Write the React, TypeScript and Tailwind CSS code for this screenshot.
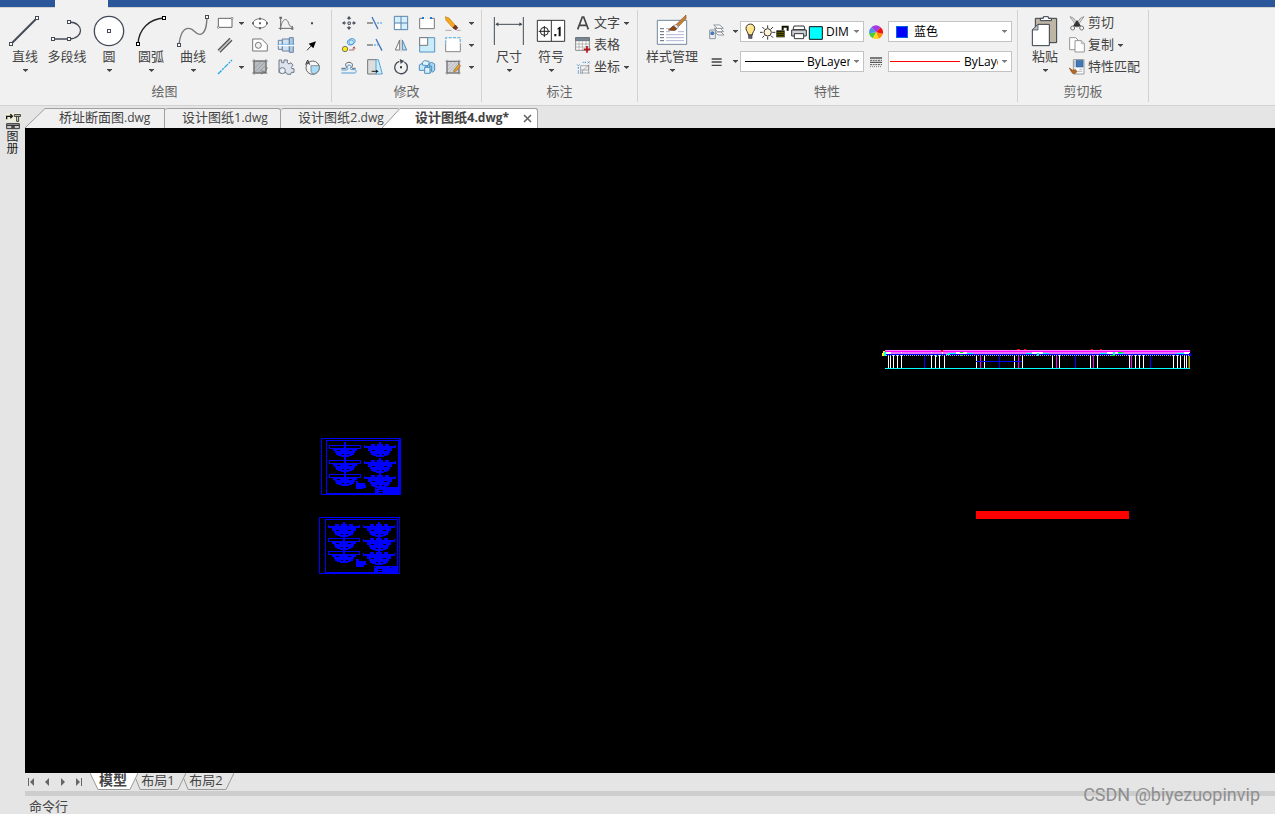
import type { ReactNode } from "react";

type IconProps = { x: number; y: number; size?: "sm" | "lg"; children: ReactNode };

/* Icons are drawn on a 3-units-per-pixel sheet; x and y pick the icon's cell. */
function Icon({ x, y, size = "sm", children }: IconProps) {
  const units = size === "lg" ? 108 : 66;
  return (
    <svg
      viewBox={`${x} ${y} ${units} ${units}`}
      className={size === "lg" ? "size-9 shrink-0" : "size-[22px] shrink-0"}
      fill="none"
      stroke="#444b57"
      strokeWidth="3"
      aria-hidden="true"
    >
      {children}
    </svg>
  );
}

function Caret({ className = "" }: { className?: string }) {
  return (
    <svg viewBox="0 0 5 3" className={`h-[3px] w-[5px] shrink-0 ${className}`} fill="#444" aria-hidden="true">
      <path d="M0 0h5v.6L2.500 3 0 .6z" />
    </svg>
  );
}

function BigButton({ icon, label, wide = false, menu = true }: { icon: ReactNode; label: string; wide?: boolean; menu?: boolean }) {
  return (
    <button type="button" className={`flex flex-col items-center pt-px whitespace-nowrap ${wide ? "w-15" : "w-[42px]"}`}>
      {icon}
      <span className="leading-[14px]">{label}</span>
      <span className="flex h-4 items-center">{menu && <Caret />}</span>
    </button>
  );
}

function IconButton({ label, children }: { label: string; children: ReactNode }) {
  return (
    <button type="button" aria-label={label} className="flex items-center justify-center">
      {children}
    </button>
  );
}

function MenuArrow({ label }: { label: string }) {
  return (
    <button type="button" aria-label={label} className="flex items-center justify-center">
      <Caret />
    </button>
  );
}

function RowButton({ icon, label, menu = false }: { icon: ReactNode; label: string; menu?: boolean }) {
  return (
    <button type="button" className="flex h-[22px] items-center whitespace-nowrap">
      {icon}
      <span className="pb-[2px] leading-4">{label}</span>
      {menu && <Caret className="ml-1" />}
    </button>
  );
}

function Group({ title, pad = "px-1", children }: { title: string; pad?: string; children: ReactNode }) {
  return (
    <>
      <section className={`flex shrink-0 flex-col pt-1 ${pad}`}>
        <div className="flex h-[66px]">{children}</div>
        <h2 className="text-center leading-[27px] text-[#666]">{title}</h2>
      </section>
      <div className="mt-[2px] mb-[3px] w-px shrink-0 bg-[#d2d2d2]" />
    </>
  );
}

function Combo({ label, value, lead }: { label: string; value: string; lead: ReactNode }) {
  return (
    <div className="flex h-[21px] w-[124px] items-center border border-[#c3c3c3] bg-white">
      {lead}
      <select
        aria-label={label}
        className="min-w-0 flex-1 appearance-none overflow-hidden bg-transparent text-clip whitespace-nowrap text-black outline-none"
      >
        <option>{value}</option>
      </select>
      <Caret className="mx-1 opacity-70" />
    </div>
  );
}

const node = (cx: number, cy: number) => (
  <rect key={`${cx}-${cy}`} x={cx - 4.5} y={cy - 4.5} width="9" height="9" fill="#fff" />
);

function DrawGroup() {
  return (
    <Group title="绘图" pad="pl-1 pr-[6px]">
      <BigButton
        label="直线"
        icon={
          <Icon x={21} y={39} size="lg">
            <path d="M33 132 111 54" strokeWidth="6" />
            {node(33, 132)}
            {node(111, 54)}
          </Icon>
        }
      />
      <BigButton
        label="多段线"
        menu={false}
        icon={
          <Icon x={147} y={39} size="lg">
            <path d="M159 117h48M207 66c46 0 46 51 0 51" strokeWidth="4" />
            {node(159, 117)}
            {node(207, 117)}
            {node(207, 66)}
          </Icon>
        }
      />
      <BigButton
        label="圆"
        icon={
          <Icon x={273} y={39} size="lg">
            <circle cx="327" cy="93" r="44" fill="#fff" strokeWidth="4" />
            {node(327, 93)}
          </Icon>
        }
      />
      <BigButton
        label="圆弧"
        icon={
          <Icon x={399} y={39} size="lg">
            <path d="M414 132c2-44 34-76 78-78" stroke="#222" strokeWidth="4" />
            <g stroke="#000">
              {node(414, 132)}
              {node(492, 54)}
            </g>
          </Icon>
        }
      />
      <BigButton
        label="曲线"
        icon={
          <Icon x={525} y={39} size="lg">
            <path d="M537 135c4-40 16-50 29-50 18 0 18 20 35 18 16-3 19-25 20-52" stroke="#777" strokeWidth="4" />
            {node(537, 135)}
            {node(621, 51)}
          </Icon>
        }
      />
      <div className="grid grid-cols-[22px_11px_26px_26px_26px] grid-rows-[22px_22px_22px]">
        <IconButton label="矩形">
          <Icon x={27} y={36}>
            <path d="M40 55h41v27H40z" fill="#fff" stroke="#666" />
            <g fill="#fff" stroke="#666" strokeWidth="2">
              <circle cx="40" cy="82" r="3" />
              <circle cx="81" cy="55" r="3" />
            </g>
          </Icon>
        </IconButton>
        <MenuArrow label="矩形选项" />
        <IconButton label="椭圆">
          <Icon x={132} y={36}>
            <ellipse cx="165" cy="70" rx="21" ry="14" fill="#fff" stroke="#777" />
            <g fill="#666" stroke="none">
              <path d="M141 67h6v6h-6zM183 67h6v6h-6zM162 53h6v6h-6zM162 67h6v6h-6zM162 82h6v6h-6z" />
            </g>
          </Icon>
        </IconButton>
        <IconButton label="样条">
          <Icon x={210} y={36}>
            <path d="M227 51v39M221 85h43" stroke="#666" />
            <path d="M227 82c6-28 18-30 24-12 3 9 5 11 13 9" stroke="#777" strokeWidth="3" />
            <path d="M223 50h8v6h-8zM259 82h6v7h-6z" fill="#666" stroke="none" />
          </Icon>
        </IconButton>
        <IconButton label="点">
          <Icon x={288} y={36}>
            <path d="M318 67h6v6h-6z" fill="#444" stroke="none" />
          </Icon>
        </IconButton>

        <IconButton label="双线">
          <Icon x={27} y={102}>
            <path d="M39 151 75 115M45 157l36-36" stroke="#555" strokeWidth="4" />
            <path d="M42 154 78 118" stroke="#aaa" strokeWidth="3" />
          </Icon>
        </IconButton>
        <span />
        <IconButton label="区域">
          <Icon x={132} y={102}>
            <path d="M143 117h27l17 17v19h-44z" fill="#fff" stroke="#777" />
            <circle cx="160" cy="136" r="9" fill="#f1f1f1" stroke="#777" />
          </Icon>
        </IconButton>
        <IconButton label="轴">
          <Icon x={210} y={102}>
            <g stroke="#6d829b" strokeWidth="3">
              <path d="M220 121h12v27h-12z" fill="#dcebf8" />
              <path d="M232 117h21v36h-21z" fill="#cfe2f5" />
              <path d="M253 113h12v44h-12z" fill="#a9c9ec" />
            </g>
            <path d="M220 136h47" stroke="#fff" strokeWidth="5" />
            <path d="M218 133h50" stroke="#4aa3e8" strokeWidth="2" />
          </Icon>
        </IconButton>
        <IconButton label="引线箭头">
          <Icon x={288} y={102}>
            <path d="M306 151l14-15" stroke="#333" />
            <path d="M333 124l-22 7 14 14z" fill="#000" stroke="none" />
          </Icon>
        </IconButton>

        <IconButton label="构造线">
          <Icon x={27} y={168}>
            <path d="M39 222 81 180" stroke="#22a7e8" strokeDasharray="15 3 6 3" strokeWidth="4" />
          </Icon>
        </IconButton>
        <MenuArrow label="构造线选项" />
        <IconButton label="填充">
          <Icon x={132} y={168}>
            <path d="M147 183h36v36h-36z" fill="#b9bdc2" stroke="#666" />
            <path d="M141 183h48M141 219h30M147 177v48M183 177v30" stroke="#666" strokeWidth="2" />
            <path d="M148 205l20-20M150 216l31-31M160 218l22-22" stroke="#8d9298" strokeWidth="2" />
            <path d="M168 222c12-4 16-10 19-20M169 212l18 9" stroke="#555" strokeWidth="2" />
          </Icon>
        </IconButton>
        <IconButton label="零件">
          <Icon x={210} y={168}>
            <path
              d="M222 180h8v8h7v-8h10v8l5 4 6-4 6 8-5 6 1 4h7v11h-8l-2 6h-10l-3-5H222z"
              fill="#dce3ec"
              stroke="#6d7886"
            />
            <circle cx="232" cy="212" r="9" fill="#eef2f7" stroke="#6d7886" />
          </Icon>
        </IconButton>
        <IconButton label="局部放大">
          <Icon x={288} y={168}>
            <circle cx="323" cy="203" r="20" fill="#f5f5f5" stroke="#666" />
            <path d="M318 197h25c1 16-8 24-20 25l-5-8z" fill="#a9dcf8" stroke="#666" strokeWidth="2" />
            <path d="M302 194l6-14 6 14M304 189h8" stroke="#333" />
          </Icon>
        </IconButton>
      </div>
    </Group>
  );
}

function ModifyGroup() {
  return (
    <Group title="修改">
      <div className="grid grid-cols-[26px_26px_26px_26px_26px_11px] grid-rows-[22px_22px_22px]">
        <IconButton label="移动">
          <Icon x={24} y={36}>
            <path d="M54 66h7v7h-7z" fill="#fff" />
            <path d="M57 48l7 8H50zM57 90l7-8H50zM36 69l8-6v12zM78 69l-8-6v12z" fill="#444b57" stroke="none" />
            <path d="M57 54v6M57 78v6M42 69h6M66 69h6" />
          </Icon>
        </IconButton>
        <IconButton label="修剪">
          <Icon x={102} y={36}>
            <path d="M111 69h18" stroke="#444" />
            <path d="M126 51l18 36" stroke="#3e78b8" strokeWidth="4" />
            <path d="M141 69h18" stroke="#2f9be0" strokeDasharray="6 3" />
          </Icon>
        </IconButton>
        <IconButton label="阵列">
          <Icon x={180} y={36}>
            <path d="M193 49h40v40h-40z" fill="#d5effc" stroke="#5b84ad" />
            <path d="M195 70h17v17h-17z" fill="#fff" stroke="none" />
            <path d="M213 49v40M193 69h40" stroke="#5b84ad" />
          </Icon>
        </IconButton>
        <IconButton label="打断">
          <Icon x={258} y={36}>
            <path d="M276 55h-7v31h44V55h-7" fill="#fff" stroke="#777" />
            <path d="M279 55h24" stroke="#ccc" strokeDasharray="3 3" />
            <path d="M276 51h6v6h-6zM300 51h6v6h-6z" fill="#207bd0" stroke="none" />
          </Icon>
        </IconButton>
        <IconButton label="删除">
          <Icon x={336} y={36}>
            <path d="M346 50l11 4 19 22-7 8-21-23z" fill="#f3a51d" stroke="#c47f12" strokeWidth="2" />
            <path d="M376 75l7 8-5 6-9-5z" fill="#6e3428" stroke="#6e3428" />
            <path d="M346 91h19M380 91h12" stroke="#888" strokeWidth="2" />
          </Icon>
        </IconButton>
        <MenuArrow label="删除选项" />

        <IconButton label="复制对象">
          <Icon x={24} y={102}>
            <path d="M52 128c0-8 8-12 15-12 10 0 10 9 5 14-8 8-20 6-20-2z" fill="#c4e6fa" stroke="#3f93cf" strokeWidth="3" />
            <circle cx="64" cy="127" r="7" stroke="#3f93cf" strokeWidth="2" />
            <circle cx="45" cy="147" r="8" fill="#ffee00" stroke="#777" />
            <path d="M57 150h15v-9M68 146l4-6 4 6" stroke="#8e2f2f" strokeWidth="2" />
          </Icon>
        </IconButton>
        <IconButton label="延伸">
          <Icon x={102} y={102}>
            <path d="M111 135h18" stroke="#444" />
            <path d="M132 135h12" stroke="#2f9be0" strokeDasharray="6 3" />
            <path d="M138 117l18 35" stroke="#3e78b8" strokeWidth="4" />
          </Icon>
        </IconButton>
        <IconButton label="镜像">
          <Icon x={180} y={102}>
            <path d="M209 120v30h-13z" fill="#fff" stroke="#777" />
            <path d="M217 120v30h13z" fill="#b5def5" stroke="#5d89ad" />
            <path d="M213 116v40" stroke="#bbb" strokeWidth="2" />
          </Icon>
        </IconButton>
        <IconButton label="缩放">
          <Icon x={258} y={102}>
            <path d="M269 113h45v43h-45z" fill="#c8ecfc" stroke="#5793bd" />
            <path d="M269 113h24v23h-24z" fill="#fff" stroke="#777" />
          </Icon>
        </IconButton>
        <IconButton label="拉伸">
          <Icon x={336} y={102}>
            <path d="M347 113h44v42h-44z" fill="#fff" stroke="#888" />
            <path d="M347 130v-17h44v17" stroke="#fff" />
            <path d="M347 130v-17h44v17" stroke="#5caee0" strokeDasharray="9 4" />
          </Icon>
        </IconButton>
        <MenuArrow label="拉伸选项" />

        <IconButton label="偏移">
          <Icon x={24} y={168}>
            <path d="M34 205h12c4 0 5-2 3-5-5-7 0-13 8-13s13 6 9 13c-2 3-1 5 3 5h8" stroke="#59636e" strokeWidth="3" />
            <path d="M34 219h40c6 0 6-10 0-10h-9c-4 0-5-3-3-6 2-4 0-8-5-8s-6 4-4 8c2 4 0 7-4 7H34" stroke="#4e99d4" strokeWidth="3" />
          </Icon>
        </IconButton>
        <IconButton label="斜切">
          <Icon x={102} y={168}>
            <path d="M113 179h27v43h-27z" fill="#ddd" stroke="#777" />
            <path d="M138 179h7l12 43h-19z" fill="#c9edfc" stroke="#5aa3d1" />
            <path d="M125 214h15" stroke="#222" />
            <path d="M138 209l8 5-8 5z" fill="#222" stroke="none" />
          </Icon>
        </IconButton>
        <IconButton label="旋转">
          <Icon x={180} y={168}>
            <path d="M223 186a19 19 0 1 1-15-2" strokeWidth="4" />
            <path d="M209 177l14 6-11 9z" fill="#444b57" stroke="none" />
            <path d="M210 199h6v6h-6z" fill="#333" stroke="none" />
          </Icon>
        </IconButton>
        <IconButton label="分解">
          <Icon x={258} y={168}>
            <g stroke="#4f8fbe" strokeWidth="3">
              <path d="M268 195l9-5h15v15l-7 6h-17z" fill="#c8e9fa" />
              <path d="M277 187l6-5 14 2v9l-6 4-14-2z" fill="#e2f4fd" />
              <path d="M299 189l6-2 9 5v19l-6 6-9-9z" fill="#a9d8f4" />
              <path d="M284 202h16v18h-16z" fill="#d9f1fc" />
              <path d="M284 202l6-4h15v17l-5 5" />
            </g>
          </Icon>
        </IconButton>
        <IconButton label="编辑填充">
          <Icon x={336} y={168}>
            <path d="M351 184h36v35h-36z" fill="#d4d6d9" stroke="#666" />
            <path d="M346 184h46M346 219h46M351 179v45M387 179v45" stroke="#777" strokeWidth="2" />
            <path d="M352 200l15-15M353 210l24-24M358 216l26-27" stroke="#a7abb0" strokeWidth="2" />
            <path d="M372 210l14-17 6 4-12 15-9 3z" fill="#e3a13c" stroke="#9a6521" strokeWidth="2" />
          </Icon>
        </IconButton>
        <MenuArrow label="编辑填充选项" />
      </div>
    </Group>
  );
}

function AnnotateGroup() {
  return (
    <Group title="标注" pad="px-[6px]">
      <BigButton
        label="尺寸"
        icon={
          <Icon x={33} y={39} size="lg">
            <path d="M43 51v84M130 51v84M48 73h78" />
            <path d="M46 73l9-6v12zM127 73l-9-6v12z" fill="#444b57" stroke="none" />
          </Icon>
        }
      />
      <BigButton
        label="符号"
        icon={
          <Icon x={159} y={39} size="lg">
            <path d="M172 61h82v63h-82zM214 61v63" fill="#fff" stroke="#333" />
            <circle cx="193" cy="94" r="12" stroke="#222" />
            <path d="M176 94h34M193 78v33" stroke="#222" />
            <path d="M223 102h6v7h-6zM233 85l6-5h3v29h-6V87l-4 2z" fill="#111" stroke="none" />
          </Icon>
        }
      />
      <div className="mr-[2px] flex flex-col">
        <RowButton
          label="文字"
          menu
          icon={
            <Icon x={276} y={36}>
              <path d="M293 88l14-37h4l14 37M299 76h20" stroke="#454545" strokeWidth="5" />
            </Icon>
          }
        />
        <RowButton
          label="表格"
          icon={
            <Icon x={276} y={102}>
              <path d="M287 113h41v38h-41z" fill="#fff" stroke="#888" />
              <path d="M287 113h41v9h-41z" fill="#7c8794" stroke="#66717e" />
              <path d="M287 132h41M287 141h41M297 122v29M307 122v29M318 122v29" stroke="#999" strokeWidth="2" />
              <path d="M311 148h20M321 138v20" stroke="#b4141e" strokeWidth="5" />
            </Icon>
          }
        />
        <RowButton
          label="坐标"
          menu
          icon={
            <Icon x={276} y={168}>
              <path d="M302 221v-24h26M302 210h24v-13M307 221v-8l19-18v26M300 219h29" stroke="#858a91" strokeWidth="2" />
              <path d="M295 201v5M295 211v4M295 217v4M308 187h3M314 187h4" stroke="#2e86d1" />
              <path d="M291 193l4 5 4-5M323 184l6 6M329 184l-6 6" stroke="#2e86d1" strokeWidth="2" />
            </Icon>
          }
        />
      </div>
    </Group>
  );
}

function LayerIcons() {
  return (
    <svg viewBox="318 66 249 57" className="mr-[2px] h-[19px] w-[83px] shrink-0" fill="none" aria-hidden="true">
      <path d="M340 105c0-9-7-11-7-20 0-17 26-17 26 0 0 9-7 11-7 20z" fill="#ffe48a" stroke="#333" strokeWidth="3" />
      <path d="M341 105h10v10h-10z" fill="#667" stroke="#333" strokeWidth="2" />
      <path d="M340 82c1-5 4-6 7-6" stroke="#fff" strokeWidth="3" />
      <circle cx="398" cy="97" r="11" fill="#fff6d8" stroke="#333" strokeWidth="3" />
      <path d="M398 76v8M398 110v9M375 97h8M412 97h9M382 81l6 6M408 107l6 6M414 81l-6 6M388 107l-6 6" stroke="#333" strokeWidth="3" />
      <path d="M424 91h25v21h-25z" fill="#141400" />
      <path d="M426 97h21M426 103h21M426 109h21" stroke="#8c8c00" strokeWidth="2" />
      <path d="M443 90V80h15v12" stroke="#141400" strokeWidth="6" />
      <path d="M477 78h30l3 11h-36z" fill="#fff" stroke="#333" strokeWidth="3" />
      <path d="M470 90h44v18h-44z" fill="#ccd1d8" stroke="#333" strokeWidth="3" />
      <path d="M478 101h28v15h-28z" fill="#fff" stroke="#333" strokeWidth="3" />
      <path d="M523 80h39v38h-39z" fill="#00ffff" stroke="#111" strokeWidth="3" />
    </svg>
  );
}

function PropertiesGroup() {
  return (
    <Group title="特性" pad="pl-1 pr-[5px]">
      <BigButton
        label="样式管理"
        wide
        icon={
          <Icon x={57} y={39} size="lg">
            <path d="M67 61h88v72H67z" fill="#fff" stroke="#72899e" />
            <path d="M75 86h12M75 95h12M75 104h12M75 113h12M75 122h12" stroke="#5d6875" />
            <path d="M93 86h18M93 95h12M129 95h18M93 104h54M93 113h54M93 122h54" stroke="#b1b3d5" />
            <path d="M124 73l29-28v11l-22 23z" fill="#c9823a" stroke="#8b5523" strokeWidth="2" />
            <path d="M122 72l9 9-7 6-9-8z" fill="#e5e7ea" stroke="#777" strokeWidth="2" />
            <path d="M116 78l9 8c-4 8-14 5-25 4 8-2 8-11 16-12z" fill="#8d4716" stroke="#5d2f10" strokeWidth="2" />
          </Icon>
        }
      />
      <div className="ml-px grid grid-cols-[28px_9px_124px_24px_124px] grid-rows-[21px_21px] items-center gap-y-[9px] pt-[9px] text-xs">
        <IconButton label="图层">
          <Icon x={213} y={62}>
            <g fill="#fff" stroke="#8d949c" strokeWidth="3">
              <path d="M240 95h18l9 9h-18z" />
              <path d="M238 84h18l10 10h-18z" />
              <path d="M236 74h18l11 10h-18z" />
              <path d="M224 89h17v26h-17z" fill="#edf0f3" />
            </g>
            <circle cx="232" cy="99" r="6" fill="#477cae" stroke="none" />
          </Icon>
        </IconButton>
        <MenuArrow label="图层选项" />
        <Combo label="图层" value="DIM" lead={<LayerIcons />} />
        <IconButton label="颜色">
          <Icon x={102} y={62}>
            <g stroke="none">
              <path d="M135 96L121 81q14-12 28 0z" fill="#a53be4" />
              <path d="M135 96L149 81q10 10 6 20z" fill="#f21212" />
              <path d="M135 96l20 5q-2 9-12 14z" fill="#ff8e00" />
              <path d="M135 96l8 19q-9 3-18-1z" fill="#ffd51c" />
              <path d="M135 96l-10 18q-9-4-11-15z" fill="#49cd2f" />
              <path d="M135 96l-21 3q-1-11 7-18z" fill="#4a91ec" />
            </g>
          </Icon>
        </IconButton>
        <Combo
          label="颜色"
          value="蓝色"
          lead={<span className="mr-[6px] ml-[7px] size-3 shrink-0 border border-[#0068d8] bg-[#0000ff]" />}
        />
        <IconButton label="线型">
          <Icon x={213} y={152}>
            <path d="M230 176h30M230 185h30M230 195h30" stroke="#454545" strokeWidth="4" />
          </Icon>
        </IconButton>
        <MenuArrow label="线型选项" />
        <Combo label="线型" value="ByLayer" lead={<span className="mr-[3px] ml-1 h-px w-[59px] shrink-0 bg-black" />} />
        <IconButton label="线宽">
          <Icon x={102} y={152}>
            <path d="M117 173h36M117 186h36" stroke="#555" strokeWidth="4" />
            <path d="M117 180h36M117 193h36" stroke="#555" strokeDasharray="6 2" />
            <path d="M117 199h36" stroke="#777" strokeDasharray="3 3" />
          </Icon>
        </IconButton>
        <Combo label="线宽" value="ByLayer" lead={<span className="mr-1 ml-px h-px w-[70px] shrink-0 bg-[#ff0000]" />} />
      </div>
    </Group>
  );
}

function ClipboardGroup() {
  return (
    <Group title="剪切板" pad="px-[6px]">
      <BigButton
        label="粘贴"
        icon={
          <Icon x={36} y={39} size="lg">
            <path d="M61 55h64v73H61z" fill="#bdb6a5" stroke="#333b46" />
            <path d="M76 55h9v-5h15v5h9v7H76z" fill="#fff" stroke="#333b46" />
            <path d="M52 90l17-17h34v64H52z" fill="#fff" stroke="#333b46" />
            <path d="M52 90h17V73z" fill="#bcc4cc" stroke="#333b46" strokeWidth="2" />
          </Icon>
        }
      />
      <div className="mr-[2px] flex flex-col">
        <RowButton
          label="剪切"
          icon={
            <Icon x={153} y={36}>
              <path d="M165 50l10 4 18 24-6 3zM207 50l-10 4-18 24 6 3z" fill="#ddd" stroke="#777" strokeWidth="2" />
              <path d="M186 62l10 16h-20z" fill="#333" stroke="#333" />
              <circle cx="173" cy="84" r="6" stroke="#777" />
              <circle cx="200" cy="84" r="6" stroke="#777" />
            </Icon>
          }
        />
        <RowButton
          label="复制"
          menu
          icon={
            <Icon x={153} y={102}>
              <path d="M164 113h18l8 8v28h-26z" fill="#fff" stroke="#959595" />
              <path d="M180 122h19l9 9v25h-28z" fill="#fff" stroke="#959595" />
              <path d="M199 122v9h9" fill="#ddd" stroke="#999" strokeWidth="2" />
            </Icon>
          }
        />
        <RowButton
          label="特性匹配"
          icon={
            <Icon x={153} y={168}>
              <path d="M175 179h32v43h-32z" fill="#fff" stroke="#999" />
              <path d="M183 181h21v20h-21z" fill="#3f78b4" stroke="#2e609a" strokeWidth="2" />
              <path d="M178 182v19M188 214h14M193 208h9" stroke="#8c949d" strokeWidth="2" />
              <path d="M163 204l10 7 7-3 6 6c-4 9-14 8-17 1z" fill="#b46a29" stroke="#854715" strokeWidth="2" />
              <path d="M177 208l6-6" stroke="#ddd" strokeWidth="4" />
            </Icon>
          }
        />
      </div>
    </Group>
  );
}

function FileName({ name }: { name: string }) {
  return (
    <span className="leading-4 whitespace-nowrap">
      {name}
      <span className="text-xs">.dwg</span>
    </span>
  );
}

function DocumentTabs() {
  return (
    <div className="flex h-[22px] items-end bg-[#e5e5e5]" role="tablist">
      <svg viewBox="0 0 20 20" className="h-5 w-5 shrink-0" aria-hidden="true">
        <path d="M0 20 20 0v20z" fill="#f0f0f0" />
        <path d="M0 20 20 .5" stroke="#999" fill="none" />
      </svg>
      <button type="button" role="tab" className="flex h-5 w-[120px] shrink-0 border-t border-r border-[#a0a0a0] bg-[#f0f0f0] pl-[14px]">
        <FileName name="桥址断面图" />
      </button>
      <button type="button" role="tab" className="flex h-5 w-[116px] shrink-0 rounded-t-[3px] border-t border-r border-[#a0a0a0] bg-[#f0f0f0] pl-[17px]">
        <FileName name="设计图纸1" />
      </button>
      <button type="button" role="tab" className="flex h-5 w-[119px] shrink-0 rounded-t-[3px] border-t border-[#a0a0a0] bg-[#f0f0f0] pl-[17px]">
        <FileName name="设计图纸2" />
      </button>
      <div className="relative -ml-[18px] flex h-5 shrink-0">
        <svg viewBox="0 0 18 20" className="h-5 w-[18px] shrink-0" aria-hidden="true">
          <path d="M0 20 18 0v20z" fill="#fff" />
          <path d="M0 20 18 .5" stroke="#999" fill="none" />
        </svg>
        <div className="flex w-[138px] items-start justify-between rounded-tr-[3px] border-t border-r border-[#a0a0a0] bg-white pr-[5px] pl-[15px]">
          <button type="button" role="tab" aria-selected="true" className="leading-4 font-bold whitespace-nowrap">
            设计图纸4<span className="text-xs">.dwg*</span>
          </button>
          <button type="button" aria-label="关闭" className="flex h-[19px] items-center">
            <svg viewBox="0 0 9 9" className="size-[9px]" stroke="#666" strokeWidth="1.6" aria-hidden="true">
              <path d="M1 1l7 7M8 1 1 8" />
            </svg>
          </button>
        </div>
      </div>
    </div>
  );
}

/* One cross section: a short mast, a wide deck and a hull narrowing downwards. */
function Section({ x, y, open = false }: { x: number; y: number; open?: boolean }) {
  return (
    <g transform={`translate(${x} ${y})`} fill="#0000ff">
      <path d="M-3-12h6v12h-6z" />
      {open ? (
        <path d="M-48-3h3v12h-3zM45-3h3v12h-3zM-48-3h96v3h-96zM-48 6h96v3h-96zM-3-3h6v12h-6z" />
      ) : (
        <path d="M-9-6H9v6H-9zM-27-6h12v6h-12zM15-6h12v6H15zM-48-3h3v3h90v-3h3v9h-96z" />
      )}
      <path
        fillRule="evenodd"
        d="M-36 6h72v9h-6v6h-3v6h-6v3h-9v3h-24v-3h-9v-3h-6v-6h-3v-6h-6zM-24 12v3h9v-3zM12 12v3h9v-3zM-9 24v3h6v-3zM6 24v3h6v-3z"
      />
    </g>
  );
}

function Sheets() {
  return (
    <svg
      viewBox="0 0 300 450"
      className="absolute top-[302px] left-[285px] h-[150px] w-[100px]"
      shapeRendering="crispEdges"
      aria-label="横断面图"
    >
      <g fill="none" stroke="#0000ff" strokeWidth="3">
        <path d="M34.5 25.5h237v168h-237zM49.5 31.5h216v159h-216zM268.5 25v168M49 190.5h217" />
        <path d="M28.5 262.5h240v168h-240zM46.5 268.5h216v159h-216z" />
      </g>
      <Section x={105} y={48} open />
      <Section x={210} y={48} />
      <Section x={105} y={93} open />
      <Section x={210} y={96} />
      <Section x={105} y={135} open />
      <Section x={210} y={141} />
      <Section x={102} y={288} />
      <Section x={207} y={288} />
      <Section x={102} y={327} open />
      <Section x={207} y={330} />
      <Section x={102} y={366} open />
      <Section x={207} y={372} />
      <g fill="#0000ff">
        <path d="M138 153h6v6h21v6h3v9h-9v3h-21zM138 387h9v6h21v9h3v3h-9v6h-24z" />
        <path fillRule="evenodd" d="M195 171h72v21h-72zM198 174v3h3v-3zM207 180v3h12v-3zM207 186v3h12v-3z" />
        <path fillRule="evenodd" d="M192 408h72v21h-72zM195 411v3h3v-3zM204 417v3h12v-3zM204 423v3h12v-3zM240 411v3h3v-3z" />
      </g>
    </svg>
  );
}

const WHITE_PIERS = [39, 45, 54, 66, 78, 168, 180, 192, 207, 303, 327, 417, 441, 531, 552, 645, 666, 762, 780, 792, 804, 894, 906, 915, 927, 933];
const MAGENTA_PIERS = [315, 429, 543, 654, 768];
const BLUE_PIERS = [147, 372, 600, 825];

function piers(list: number[]) {
  return list.map((x) => `M${x} 45h3v39h-3z`).join("");
}

function Elevation() {
  return (
    <svg
      viewBox="0 0 975 120"
      className="absolute top-[212px] left-[850px] h-10 w-[325px]"
      shapeRendering="crispEdges"
      aria-label="桥梁立面图"
    >
      <path d={piers(WHITE_PIERS)} fill="#fff" />
      <path d={piers(MAGENTA_PIERS)} fill="#ff00ff" />
      <path d={`${piers(BLUE_PIERS)}M303 63h138v3H303z`} fill="#0000ff" />
      <path d="M30 30h915v3H30z" fill="#ff7fff" />
      <path d="M30 33h915v3H30z" fill="#ff00ff" />
      <path d="M30 36h915v6H30z" fill="#e879ff" />
      <path d="M33 36h15v6H33zM78 36h3v3h-3zM168 36h3v3h-3zM201 36h3v6h-3zM243 36h33v6h-33zM471 36h33v6h-33zM696 36h33v6h-33zM927 36h18v6h-18z" fill="#fff" />
      <path d="M33 42h909v3H33z" fill="#0000ff" />
      <path d="M33 46.500h909" stroke="#aaaaff" strokeWidth="3" strokeDasharray="3 3" />
      <path d="M219 39h24v3h-24zM213 42h12v3h-12zM276 39h18v3h-18zM453 39h18v3h-18zM486 39h6v9h-6zM504 39h18v3h-18zM675 39h21v3h-21zM714 36h6v9h-6zM729 39h15v3h-15zM906 39h21v3h-21zM183 45h3v6h-3zM195 45h3v3h-3zM30 84h915v3H30z" fill="#00ffff" />
      <path d="M255 36h9v3h-9zM258 45h6v3h-6zM729 36h15v3h-15zM708 45h12v3h-12zM942 48h3v36h-3z" fill="#00ff00" />
      <path d="M198 30h6v6h-6zM426 27h9v3h-9zM447 27h6v3h-6zM648 27h6v3h-6zM675 27h6v3h-6zM939 48h3v36h-3z" fill="#ff0000" />
      <path d="M24 33h6v15h-9v-9h3z" fill="#ffff00" />
      <path d="M27 36h6v12h-6z" fill="#00ffff" />
      <path d="M942 39h6v9h-6z" fill="#0000ff" />
    </svg>
  );
}

function LayoutTab({ label, active = false }: { label: string; active?: boolean }) {
  return (
    <button
      type="button"
      role="tab"
      aria-selected={active}
      className={`relative flex h-[17px] justify-center ${active ? "z-10 w-12 pr-[2px] text-sm font-bold" : "-ml-1 w-[52px] pr-1"}`}
    >
      <svg viewBox={active ? "0 0 48 17" : "0 0 52 17"} className="absolute inset-0 h-full w-full" aria-hidden="true">
        {active ? (
          <path d="M0 0 8 16.500h32L48 0" fill="#fff" stroke="#999" />
        ) : (
          <path d="M2 6 6 16.500h38L52 0" fill="none" stroke="#999" />
        )}
      </svg>
      <span className="relative leading-[14px] whitespace-nowrap">{label}</span>
    </button>
  );
}

function NavButton({ label, d }: { label: string; d: string }) {
  return (
    <button type="button" aria-label={label} className="flex h-[18px] w-4 items-center pl-[2px]">
      <svg viewBox="0 0 8 8" className="size-2" fill="#666" aria-hidden="true">
        <path d={d} />
      </svg>
    </button>
  );
}

export default function App() {
  return (
    <div className="relative flex min-h-screen flex-col overflow-hidden bg-[#e5e5e5] font-['Open_Sans','Noto_Sans_CJK_SC',sans-serif] text-[13px] text-[#444]">
      <header>
        <div className="flex h-2">
          <div className="w-[55px] border-b border-[#d2d2d2] bg-[#2b579a]" />
          <div className="w-[53px] bg-[#f1f1f1]" />
          <div className="flex-1 border-b border-[#d2d2d2] bg-[#2b579a]" />
        </div>
        <div className="flex h-[98px] border-b border-[#d2d2d2] bg-[#f1f1f1]">
          <DrawGroup />
          <ModifyGroup />
          <AnnotateGroup />
          <PropertiesGroup />
          <ClipboardGroup />
        </div>
      </header>

      <div className="flex flex-1">
        <aside className="flex w-[25px] shrink-0 flex-col items-center pt-[7px]">
          <button type="button" className="flex flex-col items-center text-xs leading-3 text-[#222]">
            <svg viewBox="12 39 48 51" className="mb-px h-[17px] w-4" fill="none" stroke="#333" strokeWidth="3" aria-hidden="true">
              <path d="M15 39h45v26H15z" fill="#efeed8" stroke="none" />
              <path d="M17 58v-9h13M28 43l6 6-6 6" stroke="#111" strokeWidth="4" />
              <path d="M40 44h19v5H40zM47 49v15h6V49" />
              <path d="M17 71h38v5H17zM17 76h38v10H17z" fill="#ccc" />
              <path d="M32 79h8v4h-8z" />
            </svg>
            <span className="w-3">图册</span>
          </button>
        </aside>
        <main className="flex min-w-0 flex-1 flex-col">
          <DocumentTabs />
          <div className="relative min-h-[400px] flex-1 overflow-hidden bg-black">
            <Sheets />
            <Elevation />
            <div className="absolute top-[383px] left-[951px] h-2 w-[153px] bg-[#ff0000]" />
          </div>
          <div className="flex h-[18px] items-start" role="tablist">
            <NavButton label="首个" d="M1 0h1v8H1zM7 0v8L3 4z" />
            <NavButton label="上一个" d="M6 0v8L2 4z" />
            <NavButton label="下一个" d="M2 0v8l4-4z" />
            <NavButton label="末个" d="M1 0v8l4-4zM6 0h1v8H6z" />
            <div className="ml-px flex">
              <LayoutTab label="模型" active />
              <LayoutTab label="布局1" />
              <LayoutTab label="布局2" />
            </div>
          </div>
        </main>
      </div>

      <footer>
        <div className="ml-[25px] h-[5px] bg-[#cdcdcd]" />
        <div className="pt-[2px] pl-[29px] leading-4">命令行</div>
      </footer>

      <div className="absolute right-[15px] bottom-[7px] font-['Roboto','Liberation_Sans',sans-serif] text-lg leading-6 text-[#8f8f8f]">
        CSDN @biyezuopinvip
      </div>
    </div>
  );
}
